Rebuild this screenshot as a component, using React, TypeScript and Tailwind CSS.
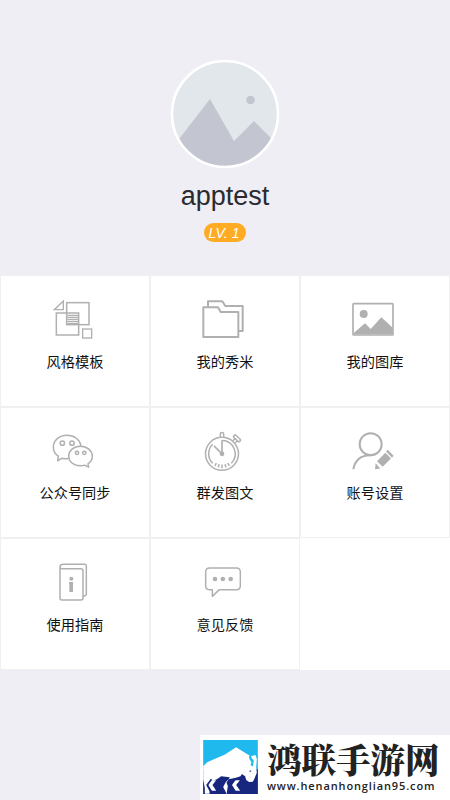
import type { ReactNode } from 'react'

interface MenuItem {
  label: string
  viewBox: string
  icon: ReactNode
}

const items: MenuItem[] = [
  {
    label: '风格模板',
    viewBox: '153 81 144 144',
    icon: (
      <g strokeWidth="4.500">
        <path d="M190 93v26h-27z" strokeWidth="4" />
        <rect x="200" y="98" width="67" height="66" />
        <rect x="169" y="129" width="67" height="66" />
        <path d="M202 136h32M202 142h32M202 148h32M202 154h32M202 160h32" strokeWidth="4" />
        <rect x="248" y="177" width="27" height="27" strokeWidth="4" />
      </g>
    ),
  },
  {
    label: '我的秀米',
    viewBox: '153 81 144 144',
    icon: (
      <g strokeWidth="6" strokeLinejoin="round">
        <path d="M160 112h44l8 14h53v75H160z" />
        <path d="M174 110V94h43l9 14h52v75h-12" />
      </g>
    ),
  },
  {
    label: '我的图库',
    viewBox: '153 81 144 144',
    icon: (
      <>
        <rect x="159" y="101" width="120" height="94" rx="2" strokeWidth="5" />
        <circle cx="191" cy="132" r="12" fill="#b0b0b0" stroke="none" />
        <path d="M162 188l33-28 17 17 32-35 34 31v20H162z" fill="#b0b0b0" stroke="none" />
      </>
    ),
  },
  {
    label: '公众号同步',
    viewBox: '153 85.5 144 144',
    icon: (
      <g strokeWidth="4.500" strokeLinejoin="round">
        <path d="M205 174c-7 2-13 1-19-1l-13 8 2-14c-10-7-15-17-15-27 0-20 18-36 41-36 22 0 39 14 42 32" />
        <path d="M266 200l-12-6c-5 2-9 2-13 2-20 0-35-13-35-29s15-30 35-30 36 14 36 30c0 9-5 17-13 23z" />
        <circle cx="187" cy="128" r="6.5" />
        <circle cx="216" cy="128" r="6.5" />
        <circle cx="231" cy="157" r="5" />
        <circle cx="253" cy="157" r="5" />
      </g>
    ),
  },
  {
    label: '群发图文',
    viewBox: '153 85.5 144 144',
    icon: (
      <g strokeWidth="4.500">
        <circle cx="216" cy="160" r="49.500" />
        <path d="M188 188a40 40 0 0 1 0-57M216 120a40 40 0 0 1 28 68" />
        <path d="M211 109v-9q0-4 5-4t5 4v9" />
        <path d="M216 119v40M192 136l21 21" strokeWidth="5" />
        <circle cx="216" cy="160" r="7" fill="#b0b0b0" stroke="none" />
        <path d="M199 188l-4 8M207 191l-2 10M216 192v11M225 191l3 10M233 188l5 8" />
        <path d="M249 121l7-8M256 127l7-7" />
        <rect x="249" y="109" width="24" height="9" rx="3" transform="rotate(43 261 113.5)" />
      </g>
    ),
  },
  {
    label: '账号设置',
    viewBox: '153 85.5 144 144',
    icon: (
      <>
        <circle cx="212" cy="131" r="33" strokeWidth="6" />
        <path d="M212 164c-29 0-47 15-52 42" strokeWidth="6" />
        <g fill="#b0b0b0" stroke="none">
          <path d="M231 182l25-25 17 17-25 25zM258 153l5-5 18 18-5 6zM227 188l14 16-16 2z" />
        </g>
      </>
    ),
  },
  {
    label: '使用指南',
    viewBox: '153 75 144 144',
    icon: (
      <>
        <path
          d="M180 98v91q0 6 6 6h57q6 0 6-6v-82q0-6-6-6h-57q-6 0-6-5 0-8 10-8h64q5 0 5 5v84q0 5-8 7"
          strokeWidth="4.500"
        />
        <circle cx="214" cy="131" r="6" fill="#b0b0b0" stroke="none" />
        <path d="M207 141h12v30h-11v-25h-1z" fill="#b0b0b0" stroke="none" />
      </>
    ),
  },
  {
    label: '意见反馈',
    viewBox: '153 75 144 144',
    icon: (
      <>
        <path
          d="M179 99h80q12 0 12 12v41q0 12-12 12h-51l-21 20v-20h-8q-12 0-12-12v-41q0-12 12-12z"
          strokeWidth="4.500"
          strokeLinejoin="round"
        />
        <g fill="#b0b0b0" stroke="none">
          <circle cx="195" cy="132" r="7" />
          <circle cx="218.500" cy="132" r="7" />
          <circle cx="242" cy="132" r="7" />
        </g>
      </>
    ),
  },
]

function MenuCell({ item }: { item: MenuItem }) {
  return (
    <button
      type="button"
      className="flex flex-col items-center border border-[#f0f0f1] bg-white pt-[21px]"
    >
      <svg viewBox={item.viewBox} className="size-12 shrink-0" fill="none" stroke="#b0b0b0">
        {item.icon}
      </svg>
      <span className="mt-[6.5px] text-[14.2px] leading-5 text-[#111111]">{item.label}</span>
    </button>
  )
}

function Avatar() {
  return (
    <svg viewBox="0 0 110 110" className="size-[110px]">
      <defs>
        <clipPath id="avatar">
          <circle cx="55" cy="55" r="53" />
        </clipPath>
      </defs>
      <circle cx="55" cy="55" r="54" fill="#fff" />
      <circle cx="55" cy="55" r="52" fill="#e1e7ea" />
      <g clipPath="url(#avatar)" fill="#c3c6d0">
        <path d="M9 80l31-40 24 42 20-20 17 17-10 31H18z" />
        <circle cx="80.500" cy="41" r="4.300" />
      </g>
      <circle cx="55" cy="55" r="53" fill="none" stroke="#fff" strokeWidth="2.500" />
    </svg>
  )
}

function BisonLogo() {
  return (
    <svg viewBox="0 0 164 162" className="mt-[5px] h-[54px] w-[55px] shrink-0">
      <path d="M0 0h164v162H0z" fill="#20b9ed" />
      <path d="M0 88h164v74H0z" fill="#17277f" />
      {/* Body and head */}
      <path
        d="M0 79l12-12 17-8 35-15 35-22 36 22 10 4 12-3 4 12-2 24 2 17-8 20-4 7-11 1-9-6-3-11-10-7-4 7-14 4-22 5-8 8-8 15 9 17v7H70l4-27-4-10 10-16-26-3-13 9-22 7-8 12 8 17v7H5v-16L0 118z"
        fill="#fff"
      />
      {/* Rear legs */}
      <path d="M24 121h15l-11 14 11 17H25l-10-17zM95 121h15l-11 14 12 17H97l-11-17z" fill="#fff" />
      <path d="M25 118l-13 17 12 19M96 118l-13 17 12 19" fill="none" stroke="#17277f" strokeWidth="5" />
      {/* Horn */}
      <path d="M146 35q-13 12-6 24l5 8-3 9 7 3 3-17-7-9q-2-8 1-18z" fill="#20b9ed" />
      <path d="M138 93l7-2-4 6z" fill="#17277f" />
    </svg>
  )
}

export default function App() {
  return (
    <div className="flex h-[800px] w-[450px] flex-col overflow-hidden bg-[#efeef4] font-['Liberation_Sans','Noto_Sans_CJK_SC',sans-serif]">
      <header className="flex h-[275px] shrink-0 flex-col items-center pt-[59px]">
        <Avatar />
        <h1 className="mt-[10px] text-[27px] leading-[34px] text-[#292b31]">apptest</h1>
        <span className="mt-[10px] flex h-[19px] w-[42px] items-center justify-center rounded-full bg-[#ffab23] pr-0.5 text-[14px] italic leading-none text-white">
          LV. 1
        </span>
      </header>

      <main className="grid h-[394.5px] shrink-0 grid-cols-3 grid-rows-3">
        {items.map((item) => (
          <MenuCell key={item.label} item={item} />
        ))}
        <div className="bg-white" />
      </main>

      {/* Site mark */}
      <footer className="mt-auto flex h-[65px] w-[250px] shrink-0 self-end bg-white pl-[3px]">
        <BisonLogo />
        <div className="ml-[9px] flex flex-col whitespace-nowrap text-[#222222]">
          <span className="mt-[4px] h-[38px] font-['Noto_Serif_CJK_SC','Noto_Sans_CJK_SC',sans-serif] text-[34.500px] font-black leading-[38px]">
            鸿联手游网
          </span>
          <span className="mt-[2px] h-[14px] font-['Open_Sans','Noto_Sans',sans-serif] text-[11px] font-semibold leading-[14px] tracking-[0.88px]">
            www.henanhonglian95.com
          </span>
        </div>
      </footer>
    </div>
  )
}
